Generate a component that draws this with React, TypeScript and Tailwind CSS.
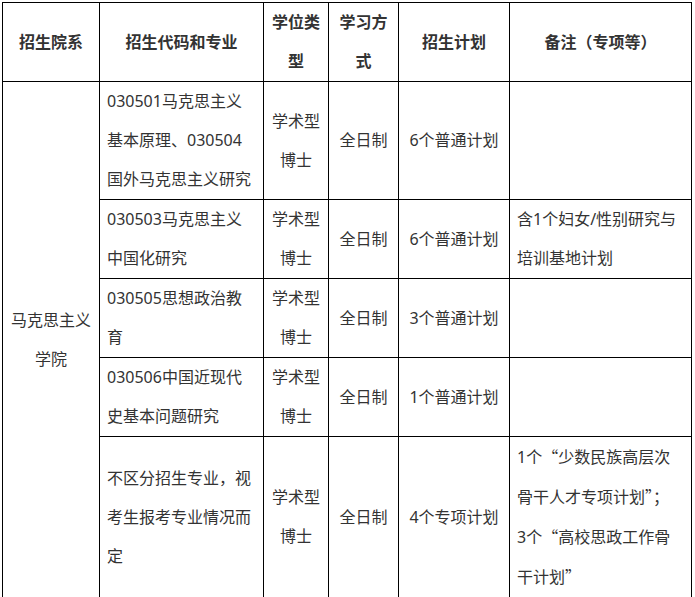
import React from 'react';

// 招生计划表
const Q = ({ children }: { children: React.ReactNode }) => (
  <span className="font-['Noto_Sans_CJK_SC',sans-serif]">{children}</span>
);

interface Row {
  major: React.ReactNode;
  plan: string;
  note?: React.ReactNode;
}

const rows: Row[] = [
  { major: '030501马克思主义基本原理、030504国外马克思主义研究', plan: '6个普通计划' },
  { major: '030503马克思主义中国化研究', plan: '6个普通计划', note: '含1个妇女/性别研究与培训基地计划' },
  { major: '030505思想政治教育', plan: '3个普通计划' },
  { major: '030506中国近现代史基本问题研究', plan: '1个普通计划' },
  {
    major: '不区分招生专业，视考生报考专业情况而定',
    plan: '4个专项计划',
    note: (
      <>
        1个<Q>“</Q>少数民族高层次骨干人才专项计划<Q>”</Q>；<br />
        3个<Q>“</Q>高校思政工作骨干计划<Q>”</Q>
      </>
    ),
  },
];

const th = 'border border-black px-[7px] font-bold text-center align-middle';
const td = 'border border-black px-[7px] align-middle';

export default function App() {
  return (
    <div className="pt-[2px] pl-[2px] bg-white min-h-screen">
      <table className="table-fixed border-collapse w-[690px] text-[16px] leading-[39px] text-[#333] font-['Noto_Sans','Noto_Sans_CJK_SC',sans-serif]">
        <colgroup>
          <col className="w-[97px]" />
          <col className="w-[164px]" />
          <col className="w-[65px]" />
          <col className="w-[70px]" />
          <col className="w-[111px]" />
          <col className="w-[182px]" />
        </colgroup>
        <thead>
          <tr>
            <th className={th}>招生院系</th>
            <th className={th}>招生代码和专业</th>
            <th className={th}>学位类型</th>
            <th className={th}>学习方式</th>
            <th className={th}>招生计划</th>
            <th className={th}>备注（专项等）</th>
          </tr>
        </thead>
        <tbody>
          {rows.map((r, i) => (
            <tr key={i}>
              {i === 0 && (
                <td rowSpan={rows.length} className={`${td} text-center`}>
                  马克思主义学院
                </td>
              )}
              <td className={td}>{r.major}</td>
              <td className={`${td} text-center`}>学术型博士</td>
              <td className={`${td} text-center`}>全日制</td>
              <td className={`${td} text-center`}>{r.plan}</td>
              <td className={`${td} break-all`}>{r.note}</td>
            </tr>
          ))}
        </tbody>
      </table>
    </div>
  );
}
